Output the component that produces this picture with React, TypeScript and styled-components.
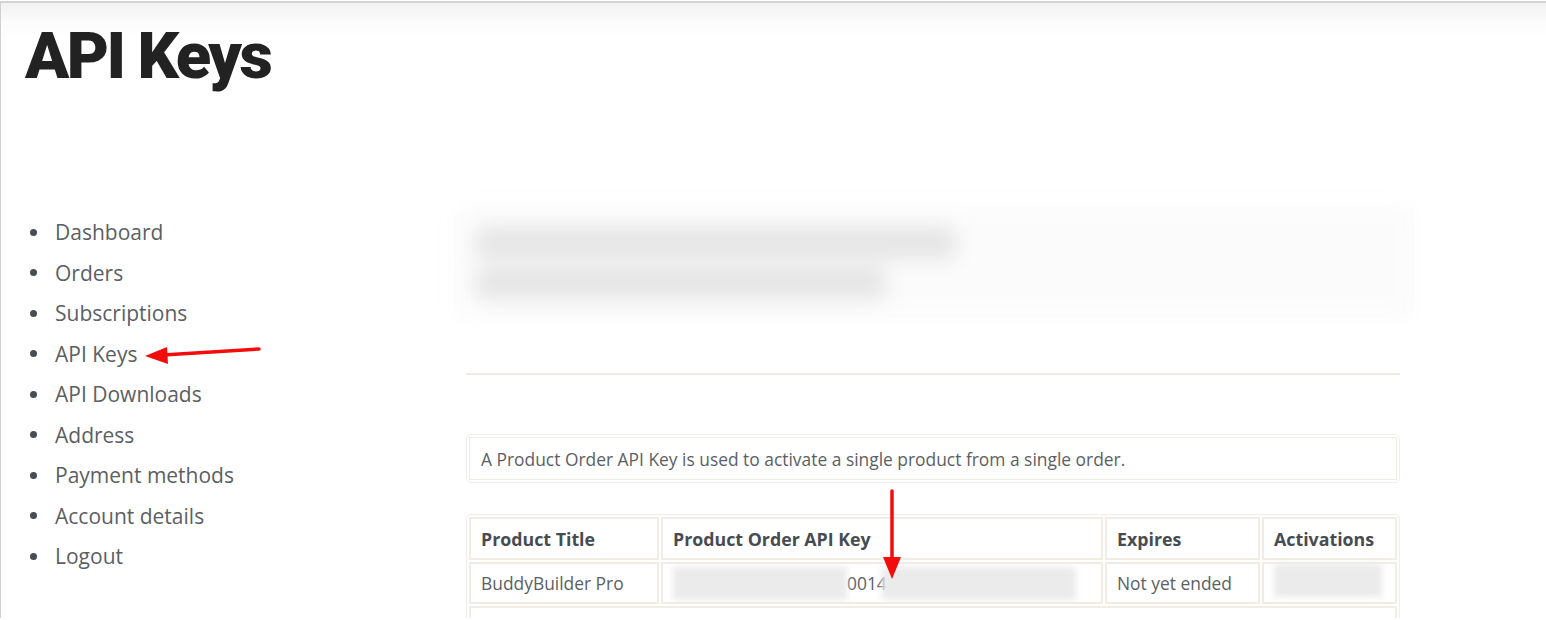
import React from "react";
import styled, { createGlobalStyle } from "styled-components";

const Global = createGlobalStyle`
  html, body { margin: 0; padding: 0; background: #fff; }
  body { font-family: "Open Sans", "Noto Sans", sans-serif; overflow: hidden; }
`;

const Frame = styled.div`
  position: relative;
  margin-top: 1px;
  height: 617px;
  border-top: 2px solid #d3d3d3;
  border-left: 1px solid #d0d0d0;
  background: linear-gradient(#f2f2f2 0px, #fbfbfb 18px, #ffffff 34px);
  box-sizing: border-box;
  overflow: hidden;
`;

const Title = styled.h1`
  margin: 0;
  padding: 21px 0 0 24px;
  font-family: Roboto, "Liberation Sans", sans-serif;
  font-weight: 900;
  font-size: 65px;
  line-height: 1;
  letter-spacing: -2.5px;
  color: #222;
`;

const Columns = styled.div`
  display: flex;
  margin-top: 118px;
`;

const Nav = styled.ul`
  list-style: none;
  margin: 0;
  padding: 5px 0 0 29px;
  width: 465px;
  box-sizing: border-box;
  flex-shrink: 0;
`;

const NavItem = styled.li`
  display: flex;
  align-items: center;
  height: 40.5px;
  font-size: 21px;
  color: #5b5f64;
  gap: 18px;
`;

const Bullet = styled.span`
  width: 7px;
  height: 7px;
  border-radius: 50%;
  background: #474c52;
  flex-shrink: 0;
`;

const Main = styled.div`
  width: 934px;
  flex-shrink: 0;
`;

const Blurred = styled.div`
  margin-left: -12px;
  width: 960px;
  height: 110px;
  background: #fbfbfb;
  filter: blur(10px);
  display: flex;
  flex-direction: column;
  gap: 8px;
  padding: 20px 0 0 22px;
  box-sizing: border-box;
`;

const BlurLine = styled.div<{ $w: number }>`
  width: ${(p) => p.$w}px;
  height: 32px;
  background: #e5e5e5;
  border-radius: 10px;
`;

const Rule = styled.hr`
  margin: 56px 0 0;
  border: none;
  height: 2px;
  background: #efebe3;
`;

const Notice = styled.div`
  margin-top: 59px;
  border: 1px solid #eeeeee;
  border-radius: 5px;
  padding: 2px;
`;

const NoticeInner = styled.div`
  border: 1px solid #f0ece2;
  padding: 0 11px;
  height: 41px;
  display: flex;
  align-items: center;
  font-size: 17.4px;
  color: #5b5f64;
`;

const TableWrap = styled.div`
  margin-top: 31px;
  border: 1px solid #eeeeee;
  border-bottom: none;
  border-radius: 5px 5px 0 0;
  padding: 2px 2px 0;
`;

const Table = styled.table`
  border-collapse: separate;
  border-spacing: 2px;
  margin: -2px;
  width: calc(100% + 4px);
  font-size: 17.4px;
  color: #5b5f64;
`;

const Th = styled.th<{ $w: number }>`
  width: ${(p) => p.$w}px;
  text-align: left;
  font-weight: 700;
  font-size: 17.8px;
  color: #474c52;
  border: 2px solid #f1ede4;
  height: 43px;
  padding: 0 10px;
  box-sizing: border-box;
`;

const Td = styled.td`
  border: 2px solid #f1ede4;
  height: 42px;
  padding: 0 10px;
  box-sizing: border-box;
  white-space: nowrap;
`;

const KeyCell = styled.div`
  display: flex;
  align-items: center;
`;

const Smudge = styled.span<{ $w: number; $overlap?: number }>`
  display: inline-block;
  width: ${(p) => p.$w}px;
  height: 33px;
  margin-left: ${(p) => -(p.$overlap ?? 0)}px;
  background: #ebebeb;
  filter: blur(3px);
`;

const Arrow = styled.svg`
  position: absolute;
  left: 0;
  top: 0;
  pointer-events: none;
`;

const navItems = [
  "Dashboard",
  "Orders",
  "Subscriptions",
  "API Keys",
  "API Downloads",
  "Address",
  "Payment methods",
  "Account details",
  "Logout",
];

export default function App() {
  return (
    <>
      <Global />
      <Frame>
        <Title>API Keys</Title>
        <Columns>
          <Nav>
            {navItems.map((n) => (
              <NavItem key={n}>
                <Bullet />
                {n}
              </NavItem>
            ))}
          </Nav>
          <Main>
            <Blurred>
              <BlurLine $w={480} />
              <BlurLine $w={410} />
            </Blurred>
            <Rule />
            <Notice>
              <NoticeInner>
                A Product Order API Key is used to activate a single product from a single order.
              </NoticeInner>
            </Notice>
            <TableWrap>
              <Table>
                <thead>
                  <tr>
                    <Th $w={190}>Product Title</Th>
                    <Th $w={442}>Product Order API Key</Th>
                    <Th $w={155}>Expires</Th>
                    <Th $w={135}>Activations</Th>
                  </tr>
                </thead>
                <tbody>
                  <tr>
                    <Td>BuddyBuilder Pro</Td>
                    <Td>
                      <KeyCell>
                        <Smudge $w={174} />
                        0014
                        <Smudge $w={194} $overlap={5} />
                      </KeyCell>
                    </Td>
                    <Td>Not yet ended</Td>
                    <Td>
                      <Smudge $w={108} />
                    </Td>
                  </tr>
                  <tr>
                    <Td colSpan={4}>&nbsp;</Td>
                  </tr>
                </tbody>
              </Table>
            </TableWrap>
          </Main>
        </Columns>
        <Arrow width="1546" height="620" viewBox="0 0 1546 620">
          <line x1="258" y1="346" x2="162" y2="352" stroke="#f20c0c" strokeWidth="3.5" strokeLinecap="round" />
          <polygon points="144,353 166,344 167,361" fill="#f20c0c" />
          <line x1="891" y1="488" x2="891" y2="558" stroke="#f20c0c" strokeWidth="3.5" strokeLinecap="round" />
          <polygon points="891,576 882,554 900,554" fill="#f20c0c" />
        </Arrow>
      </Frame>
    </>
  );
}
